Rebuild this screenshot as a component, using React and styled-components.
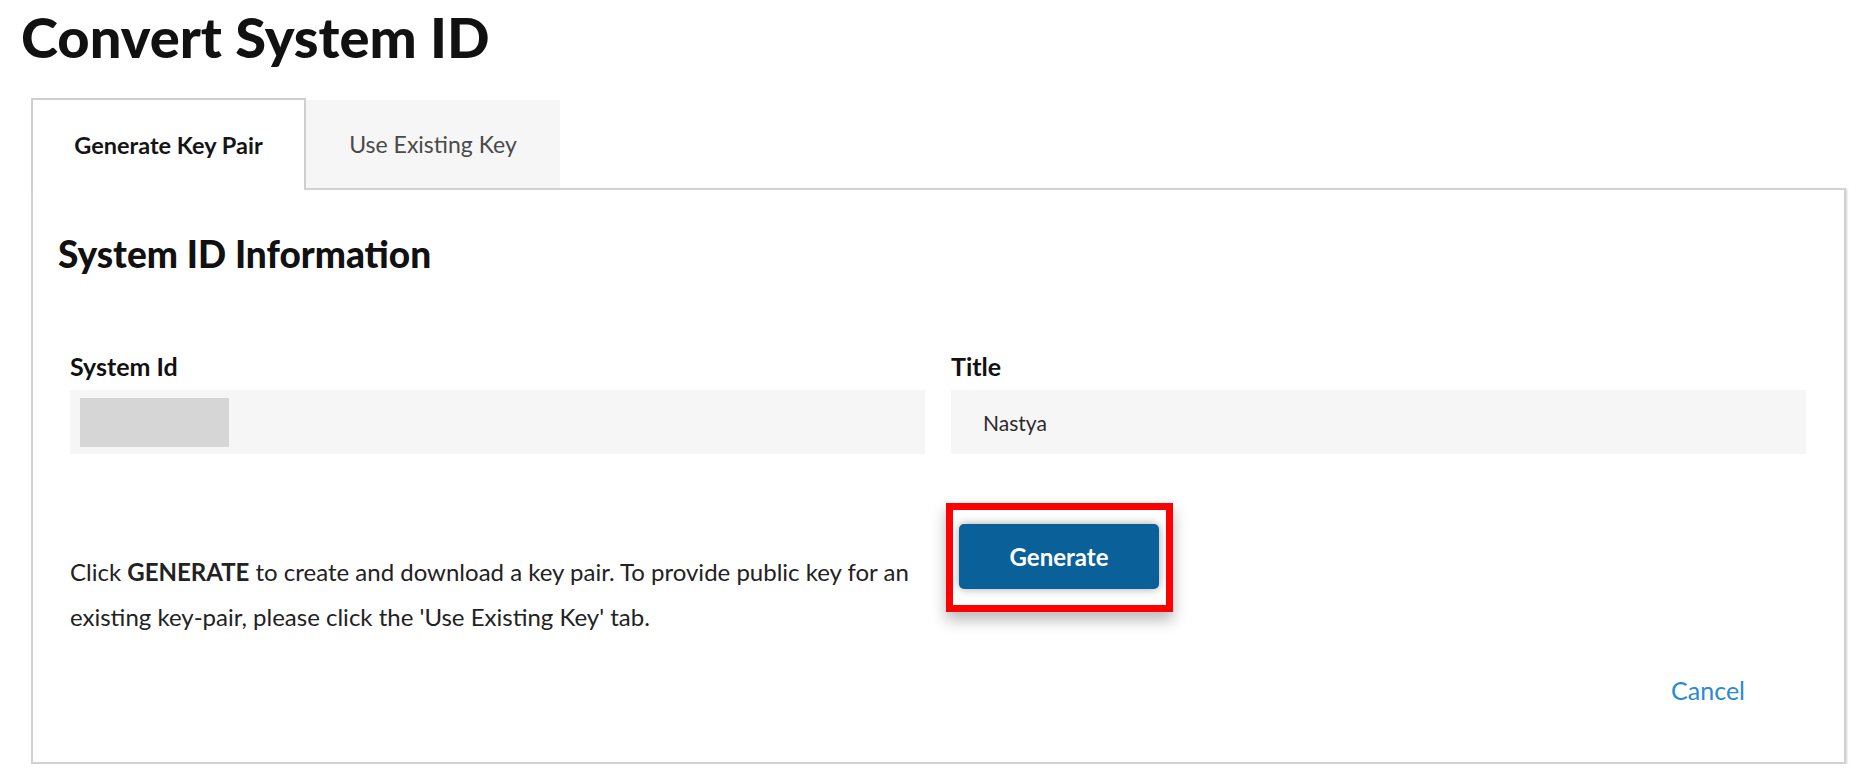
import React, { useState } from 'react';
import styled, { createGlobalStyle } from 'styled-components';

const GlobalStyle = createGlobalStyle`
  body {
    margin: 0;
    background: #fff;
    font-family: Lato, "Noto Sans", "Liberation Sans", sans-serif;
    color: #1a1a1a;
  }
`;

const Page = styled.div`
  padding: 6px 13px 0 21px;
`;

const PageTitle = styled.h1`
  margin: 0;
  font-size: 56px;
  font-weight: 900;
  line-height: 62px;
  color: #111;
`;

const TabsArea = styled.div`
  margin: 30px 0 0 10px;
`;

const TabList = styled.div`
  display: flex;
  align-items: flex-end;
`;

const Tab = styled.button`
  border: none;
  font-family: inherit;
  font-size: ${p => (p.$active ? '23.5px' : '23px')};
  cursor: pointer;
  padding: 0;
  height: ${p => (p.$active ? '92px' : '88px')};
  width: ${p => (p.$active ? '275px' : '254px')};
  background: ${p => (p.$active ? '#fff' : '#f6f6f6')};
  color: ${p => (p.$active ? '#151515' : '#4a4a4a')};
  font-weight: ${p => (p.$active ? 700 : 400)};
  border: ${p => (p.$active ? '2px solid #cfcfcf' : 'none')};
  border-bottom: none;
  margin-bottom: ${p => (p.$active ? '-2px' : '0')};
  position: relative;
  z-index: ${p => (p.$active ? 1 : 0)};
`;

const Panel = styled.div`
  border: 2px solid #d2d2d2;
  box-shadow: 1px 1px 2px rgba(0, 0, 0, 0.18);
  height: 576px;
  box-sizing: border-box;
  padding: 0 25px;
  display: flex;
  flex-direction: column;
`;

const SectionTitle = styled.h2`
  margin: 42px 0 0;
  font-size: 37px;
  font-weight: 900;
  line-height: 44px;
  color: #111;
`;

const FormBody = styled.div`
  padding: 0 13px 0 12px;
  margin-top: 76px;
  display: grid;
  grid-template-columns: 1fr 1fr;
  column-gap: 26px;
`;

const Field = styled.div`
  display: flex;
  flex-direction: column;
`;

const Label = styled.label`
  font-size: 25px;
  font-weight: 700;
  color: #111;
  line-height: 28px;
  margin-bottom: 10px;
`;

const ReadOnlyBox = styled.div`
  height: 64px;
  background: #f6f6f6;
  display: flex;
  align-items: center;
  padding: 0 ${p => (p.$redacted ? '10px' : '32px')};
  font-size: 21px;
  color: #2b2b2b;
`;

const Redaction = styled.span`
  width: 149px;
  height: 49px;
  background: #d6d6d6;
`;

const Hint = styled.p`
  margin: 95px 0 0;
  font-size: 24px;
  line-height: 45px;
  color: #222;
  white-space: nowrap;
`;

const Highlight = styled.div`
  margin: 49px 0 0 -5px;
  align-self: flex-start;
  border: 7px solid #ff0000;
  padding: 14px 7px 16px 6px;
  box-shadow: 0 8px 14px rgba(0, 0, 0, 0.28);
  display: inline-flex;
`;

const PrimaryButton = styled.button`
  width: 200px;
  height: 65px;
  border: none;
  border-radius: 5px;
  background: #0a6199;
  color: #fff;
  font-family: inherit;
  font-size: 24px;
  font-weight: 700;
  cursor: pointer;
  box-shadow: 0 0 10px rgba(0, 0, 0, 0.35);
`;

const Footer = styled.div`
  margin-top: auto;
  margin-bottom: 57px;
  display: flex;
  justify-content: flex-end;
  padding-right: 74px;
`;

const LinkButton = styled.button`
  border: none;
  background: none;
  font-family: inherit;
  font-size: 25px;
  color: #2a8ad0;
  cursor: pointer;
  padding: 0;
`;

const App = () => {
  const [tab, setTab] = useState('generate');

  return (
    <Page>
      <GlobalStyle />
      <PageTitle>Convert System ID</PageTitle>
      <TabsArea>
        <TabList>
          <Tab $active={tab === 'generate'} onClick={() => setTab('generate')}>
            Generate Key Pair
          </Tab>
          <Tab $active={tab === 'existing'} onClick={() => setTab('existing')}>
            Use Existing Key
          </Tab>
        </TabList>
        <Panel>
          <SectionTitle>System ID Information</SectionTitle>
          <FormBody>
            <Field>
              <Label>System Id</Label>
              <ReadOnlyBox $redacted>
                <Redaction />
              </ReadOnlyBox>
            </Field>
            <Field>
              <Label>Title</Label>
              <ReadOnlyBox>Nastya</ReadOnlyBox>
            </Field>
            <Hint>
              Click <strong>GENERATE</strong> to create and download a key pair. To provide public key for an
              <br />
              existing key-pair, please click the 'Use Existing Key' tab.
            </Hint>
            <Field>
              <Highlight>
                <PrimaryButton>Generate</PrimaryButton>
              </Highlight>
            </Field>
          </FormBody>
          <Footer>
            <LinkButton>Cancel</LinkButton>
          </Footer>
        </Panel>
      </TabsArea>
    </Page>
  );
};

export default App;
